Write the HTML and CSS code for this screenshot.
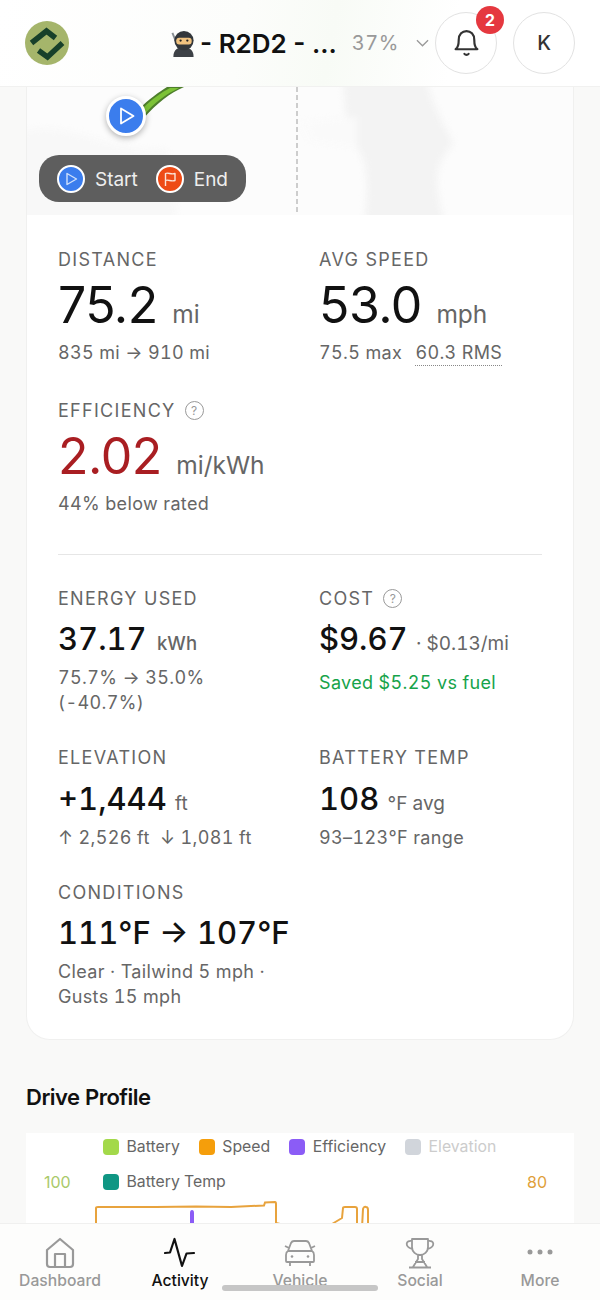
FILE: index.html
```html
<!DOCTYPE html>
<html lang="en">
<head>
  <meta charset="UTF-8">
  <title>Drive details</title>
  <link rel="stylesheet" href="styles.css">
</head>
<body>

  <!-- Top bar -->
  <header class="topbar">
    <svg class="logo" viewBox="0 0 44 44">
      <circle cx="22" cy="22" r="22" fill="#a5b56b"/>
      <path d="M6.500 22 L21.500 10 L30.500 17" fill="none" stroke="#17402a" stroke-width="5.500"/>
      <path d="M13.500 29.500 L22.500 36 L37.500 22" fill="none" stroke="#17402a" stroke-width="5.500"/>
    </svg>
    <div class="vehicle">
      <svg class="ninja" viewBox="0 0 24 28">
        <path d="M1 3 L6 15" stroke="#8a8f94" stroke-width="2" fill="none"/>
        <path d="M2 28 C2 20 7 18 12 18 C18 18 23 20 23 28 Z" fill="#3d4146"/>
        <circle cx="13" cy="11" r="10" fill="#33373b"/>
        <rect x="5" y="8" width="16" height="7" rx="3" fill="#f0c27f"/>
        <circle cx="9.500" cy="11" r="1.200" fill="#222"/>
        <circle cx="16.500" cy="11" r="1.200" fill="#222"/>
      </svg>
      <span class="vehicle-name">- R2D2 - ...</span>
      <span class="vehicle-charge">37%</span>
      <svg class="caret" viewBox="0 0 14 8">
        <path d="M1 1 L7 7 L13 1" fill="none" stroke="#999" stroke-width="1.400"/>
      </svg>
    </div>
    <div class="round-btn bell">
      <svg viewBox="0 0 24 27" width="25" height="28">
        <path d="M1.500 19.500 C4.500 17.500 4.500 14 4.500 10.500 C4.500 5 8 2 12 2 C16 2 19.500 5 19.500 10.500 C19.500 14 19.500 17.500 22.500 19.500 Z" fill="none" stroke="#333" stroke-width="2.100" stroke-linejoin="round"/>
        <path d="M10 24 C11 25.200 13 25.200 14 24" fill="none" stroke="#333" stroke-width="2.100" stroke-linecap="round"/>
      </svg>
      <span class="badge">2</span>
    </div>
    <div class="round-btn">K</div>
  </header>

  <main class="page">
    <section class="card">

      <!-- Map -->
      <div class="map">
        <svg class="map-art" viewBox="0 0 546 128">
          <g class="map-land">
            <path d="M316 -6 L400 -6 C405 20 420 40 426 56 C418 70 400 80 418 134 L338 134 C340 100 345 70 320 50 Z" fill="#f3f3f3"/>
            <path d="M-5 45 C40 30 90 70 140 62 L150 134 L-5 134 Z" fill="#f8f8f8"/>
            <path d="M275 35 L330 30 L330 60 L285 55 Z" fill="#fafafa"/>
          </g>
          <path d="M112 22 C122 12 132 5 140 0 L157 0 C143 6 130 16 116 32 Z" fill="#4e7f2c"/>
          <path d="M116 21 C125 12 135 5 143 1 L152 1 C139 7 127 16 117 28 Z" fill="#7cc236"/>
          <line x1="270" y1="0" x2="270" y2="128" stroke="#bdbdbd" stroke-width="1.500" stroke-dasharray="5 3"/>
        </svg>
        <div class="pin">
          <svg viewBox="0 0 20 20" width="20" height="20"><path d="M5 2.500 L17.500 10 L5 17.500 Z" fill="none" stroke="#fff" stroke-width="1.800" stroke-linejoin="round"/></svg>
        </div>
        <div class="map-legend">
          <span class="dot dot-start">
            <svg viewBox="0 0 16 16" width="16" height="16"><path d="M4 2.500 L13.500 8 L4 13.500 Z" fill="none" stroke="#cfe0fb" stroke-width="1.400" stroke-linejoin="round"/></svg>
          </span>
          <span class="map-legend-text">Start</span>
          <span class="dot dot-end">
            <svg viewBox="0 0 16 16" width="16" height="16"><path d="M3.500 15 L3.500 2.500 C6 1 9 4 13 2.500 L13 9.500 C9 11 6 8 3.500 9.500" fill="none" stroke="#fbe3d8" stroke-width="1.400" stroke-linejoin="round"/></svg>
          </span>
          <span class="map-legend-text">End</span>
        </div>
      </div>

      <!-- Main stats -->
      <div class="stats stats-big">
        <div class="stat">
          <div class="label">DISTANCE</div>
          <div class="value">75.2 <span class="unit">mi</span></div>
          <div class="sub">835 mi → 910 mi</div>
        </div>
        <div class="stat">
          <div class="label">AVG SPEED</div>
          <div class="value">53.0 <span class="unit">mph</span></div>
          <div class="sub">75.5 max <span class="rms">60.3 RMS</span></div>
        </div>
        <div class="stat">
          <div class="label">EFFICIENCY <span class="help">?</span></div>
          <div class="value value-bad">2.02 <span class="unit">mi/kWh</span></div>
          <div class="sub">44% below rated</div>
        </div>
      </div>

      <hr class="divider">

      <!-- Secondary stats -->
      <div class="stats stats-small">
        <div class="stat">
          <div class="label">ENERGY USED</div>
          <div class="value">37.17 <span class="unit">kWh</span></div>
          <div class="sub">75.7% → 35.0%<br>(-40.7%)</div>
        </div>
        <div class="stat">
          <div class="label">COST <span class="help">?</span></div>
          <div class="value">$9.67 <span class="unit unit-light">· $0.13/mi</span></div>
          <div class="sub saved">Saved $5.25 vs fuel</div>
        </div>
        <div class="stat">
          <div class="label">ELEVATION</div>
          <div class="value">+1,444 <span class="unit unit-tiny">ft</span></div>
          <div class="sub">↑ 2,526 ft &nbsp;↓ 1,081 ft</div>
        </div>
        <div class="stat">
          <div class="label">BATTERY TEMP</div>
          <div class="value">108 <span class="unit unit-tiny">°F avg</span></div>
          <div class="sub">93–123°F range</div>
        </div>
        <div class="stat">
          <div class="label">CONDITIONS</div>
          <div class="value">111°F → 107°F</div>
          <div class="sub">Clear · Tailwind 5 mph ·<br>Gusts 15 mph</div>
        </div>
      </div>
    </section>

    <!-- Drive profile chart -->
    <h2 class="section-title">Drive Profile</h2>
    <section class="chart">
      <div class="chart-head">
        <span class="axis axis-left">100</span>
        <div class="legend">
          <span class="legend-item"><i class="swatch swatch-battery"></i>Battery</span>
          <span class="legend-item"><i class="swatch swatch-speed"></i>Speed</span>
          <span class="legend-item"><i class="swatch swatch-eff"></i>Efficiency</span>
          <span class="legend-item legend-off"><i class="swatch swatch-elev"></i>Elevation</span>
          <span class="legend-item"><i class="swatch swatch-temp"></i>Battery Temp</span>
        </div>
        <span class="axis axis-right">80</span>
      </div>
      <svg class="chart-lines" viewBox="0 0 548 60">
        <path d="M70 32 L70 12 Q70 11 72 11 L130 11 L170 10.500 L205 11 L238 9.500 L239 6.500 L249 6 Q250 6 250 8 L250 27 L254 28 M306 28 L316 22 L317 12 Q317 11 319 11 L329 11 Q331 11 331 13 L331 32 M336 32 L337 13 Q338 10 340 11 Q342 11 342 14 L342 32" fill="none" stroke="#e8a33d" stroke-width="2"/>
        <path d="M164 32 L164 17 Q164 14 166 14 Q168 14 168 17 L168 32 Z" fill="#8b5cf6"/>
      </svg>
    </section>
  </main>

  <!-- Bottom tabs -->
  <nav class="tabs">
    <a class="tab">
      <svg viewBox="0 0 30 32" width="30" height="32"><path d="M2 13 L15 2 L28 13 L28 27 Q28 30 25 30 L5 30 Q2 30 2 27 Z M10 30 L10 17 L20 17 L20 30" fill="none" stroke="#999" stroke-width="2.200" stroke-linejoin="round"/></svg>
      <span>Dashboard</span>
    </a>
    <a class="tab tab-on">
      <svg viewBox="0 0 32 32" width="32" height="32"><path d="M1 16 L6 15.500 L10.500 2 L18 29 L22.500 16.500 L30 16" fill="none" stroke="#111" stroke-width="2.200" stroke-linejoin="round" stroke-linecap="round"/></svg>
      <span>Activity</span>
    </a>
    <a class="tab">
      <svg viewBox="0 0 32 32" width="32" height="32"><path d="M4 14 L7 6 Q8 4 10 4 L22 4 Q24 4 25 6 L28 14 Q30 15 30 18 L30 24 Q30 25 29 25 L3 25 Q2 25 2 24 L2 18 Q2 15 4 14 Z M4 14 L28 14 M6 25 L6 29 M26 25 L26 29 M1 9 L5 11 M31 9 L27 11" fill="none" stroke="#999" stroke-width="1.800" stroke-linejoin="round"/><circle cx="8" cy="19.500" r="1.300" fill="#999"/><circle cx="24" cy="19.500" r="1.300" fill="#999"/></svg>
      <span>Vehicle</span>
    </a>
    <a class="tab">
      <svg viewBox="0 0 32 32" width="32" height="32"><path d="M8 2 L24 2 L24 10 C24 15 20 18 16 18 C12 18 8 15 8 10 Z M8 4 C2 3 0 9 8 12 M24 4 C30 3 32 9 24 12 M14 18 L14 22 L9 30 M18 18 L18 22 L23 30 M11 25 L21 25 M5 30.500 L27 30.500" fill="none" stroke="#999" stroke-width="1.800" stroke-linejoin="round"/></svg>
      <span>Social</span>
    </a>
    <a class="tab">
      <svg viewBox="0 0 32 32" width="32" height="32"><circle cx="6" cy="15" r="2.500" fill="#999"/><circle cx="16" cy="15" r="2.500" fill="#999"/><circle cx="26" cy="15" r="2.500" fill="#999"/></svg>
      <span>More</span>
    </a>
    <div class="home-bar"></div>
  </nav>

</body>
</html>
```

FILE: styles.css
```css
* {
  box-sizing: border-box;
}

html, body {
  height: 1300px;
  overflow: hidden;
}

body {
  margin: 0;
  background: #f9f9f8;
  color: #111;
  font-family: Inter, "Noto Sans", sans-serif;
  font-variant-numeric: tabular-nums;
}

/* top bar */
.topbar {
  display: flex;
  align-items: center;
  height: 87px;
  padding: 0 25px;
  background: linear-gradient(100deg, #fff, #fcfdfb 40%, #f8fbf6 55%, #fff 75%);
  border-bottom: 1px solid #f1f1f0;
}

.logo {
  width: 44px;
  height: 44px;
  flex: none;
}

.vehicle {
  display: flex;
  align-items: center;
  margin-left: 102px;
  width: 264px;
}

.ninja {
  width: 24px;
  height: 27px;
  flex: none;
}

.vehicle-name {
  margin-left: 5px;
  font-size: 26px;
  font-weight: 600;
  font-variant-numeric: normal;
  white-space: nowrap;
}

.vehicle-charge {
  margin-left: 15px;
  font-size: 20px;
  letter-spacing: 0.5px;
  color: #999;
}

.caret {
  width: 13px;
  height: 8px;
  margin-left: 17px;
}

.round-btn {
  position: relative;
  display: flex;
  align-items: center;
  justify-content: center;
  flex: none;
  width: 62px;
  height: 62px;
  margin-left: 16px;
  border: 1.5px solid #e2e2e2;
  border-radius: 50%;
  background: #fff;
  font-size: 20px;
  font-weight: 500;
  color: #333;
}

.bell {
  margin-left: 0;
}

.badge {
  position: absolute;
  top: -7px;
  right: -8px;
  width: 28px;
  height: 28px;
  border-radius: 50%;
  background: #e5383f;
  color: #fff;
  font-size: 16px;
  font-weight: 700;
  line-height: 28px;
  text-align: center;
}

/* card + map */
.card {
  margin: 0 26px;
  background: #fff;
  border: 1px solid #f0f0ef;
  border-top: none;
  border-radius: 0 0 24px 24px;
  padding-bottom: 30px;
}

.map {
  position: relative;
  height: 128px;
  background: #fcfcfc;
}

.map-art {
  display: block;
  width: 100%;
  height: 100%;
}

.map-land {
  filter: blur(3px);
}

.pin {
  position: absolute;
  left: 79px;
  top: 9px;
  display: flex;
  align-items: center;
  justify-content: center;
  width: 40px;
  height: 40px;
  border: 3px solid #fff;
  border-radius: 50%;
  background: #3b7ded;
  box-shadow: 0 2px 6px rgba(0,0,0,0.3);
}

.map-legend {
  position: absolute;
  left: 12px;
  top: 68px;
  display: flex;
  align-items: center;
  width: 207px;
  height: 47px;
  padding-left: 18px;
  border-radius: 20px;
  background: #5e5e5e;
}

.map-legend-text {
  margin-left: 10px;
  margin-right: 18px;
  padding-top: 1px;
  font-size: 19px;
  color: #eee;
}

.dot {
  display: flex;
  align-items: center;
  justify-content: center;
  width: 28px;
  height: 28px;
  border: 2px solid #fff;
  border-radius: 50%;
}

.dot-start {
  background: #3b7ded;
}

.dot-end {
  background: #ee4b16;
}

/* stats */
.stats {
  display: grid;
  grid-template-columns: 261px 1fr;
  padding: 0 31px;
}

.stats-big {
  padding-top: 32px;
  row-gap: 32px;
}

.stats-small {
  padding-top: 31px;
  row-gap: 30.5px;
}

.label {
  display: flex;
  align-items: center;
  gap: 9px;
  height: 24px;
  font-size: 18px;
  letter-spacing: 1.3px;
  color: #666;
}

.help {
  display: inline-block;
  width: 19px;
  height: 19px;
  border: 1.3px solid #999;
  border-radius: 50%;
  font-size: 12px;
  letter-spacing: 0;
  line-height: 17px;
  text-align: center;
  color: #999;
}

.value {
  font-weight: 400;
  white-space: nowrap;
}

.stats-big .value {
  margin-top: 4px;
  font-size: 50px;
  font-variant-numeric: normal;
  letter-spacing: -0.5px;
  line-height: 60px;
}

.stats-small .value {
  margin-top: 9px;
  font-size: 31px;
  font-weight: 500;
  line-height: 40px;
}

.value-bad {
  color: #a91e22;
}

.unit {
  margin-left: 1px;
  font-size: 24.5px;
  font-weight: 400;
  letter-spacing: 0;
  line-height: 1;
  color: #666;
}

.stats-small .unit {
  margin-left: 2px;
  font-size: 18.5px;
  font-weight: 500;
}

.stats-small .unit-light {
  margin-left: 0;
  font-size: 19px;
  font-weight: 400;
}

.stats-small .unit-tiny {
  margin-left: 0;
  font-size: 19px;
  font-weight: 400;
}

.sub {
  font-size: 18px;
  letter-spacing: 0.35px;
  line-height: 25px;
  color: #666;
}

.stats-big .sub {
  margin-top: 5px;
  line-height: 26px;
}

.stats-small .sub {
  margin-top: 6px;
}

.stats-small .saved {
  margin-top: 11px;
  color: #16a34a;
}

.rms {
  margin-left: 8px;
  padding-bottom: 2px;
  border-bottom: 1.5px dotted #888;
}

.divider {
  height: 1px;
  margin: 37px 31px 0;
  border: none;
  background: #e6e6e6;
}

/* drive profile */
.section-title {
  margin: 42px 26px 21px;
  font-size: 22px;
  font-weight: 600;
  letter-spacing: -0.5px;
  line-height: 30px;
}

.chart {
  margin: 0 26px;
  padding-top: 4px;
  background: #fff;
}

.chart-head {
  display: grid;
  grid-template-columns: 77px 424px 1fr;
  align-items: end;
}

.axis {
  font-size: 16px;
  font-variant-numeric: normal;
  line-height: 20px;
}

.axis-left {
  padding-left: 18px;
  color: #a9c96a;
}

.axis-right {
  color: #dfa03a;
}

.legend {
  display: flex;
  flex-wrap: wrap;
  gap: 15px 19px;
}

.legend-item {
  display: flex;
  align-items: center;
  gap: 7.5px;
  font-size: 15.8px;
  line-height: 20px;
  color: #666;
}

.legend-off {
  color: #ccc;
}

.swatch {
  width: 16px;
  height: 16px;
  border-radius: 4px;
}

.swatch-battery { background: #a3d94a; }
.swatch-speed { background: #f59e0b; }
.swatch-eff { background: #8b5cf6; }
.swatch-elev { background: #d1d5db; }
.swatch-temp { background: #0f9683; }

.chart-lines {
  display: block;
  width: 100%;
  height: 60px;
  margin-top: 4px;
}

/* bottom tabs */
.tabs {
  position: fixed;
  left: 0;
  right: 0;
  bottom: 0;
  display: grid;
  grid-template-columns: repeat(5, 1fr);
  height: 77px;
  padding-top: 13px;
  background: #fdfdfc;
  border-top: 1px solid #f0f0ef;
}

.tab {
  display: flex;
  flex-direction: column;
  align-items: center;
  font-size: 15.7px;
  font-weight: 500;
  line-height: 20px;
  color: #999;
}

.tab span {
  margin-top: 2px;
}

.tab-on {
  color: #111;
}

.home-bar {
  position: absolute;
  left: 222px;
  bottom: 9px;
  width: 156px;
  height: 6px;
  border-radius: 3px;
  background: #c6c6c6;
}
```
